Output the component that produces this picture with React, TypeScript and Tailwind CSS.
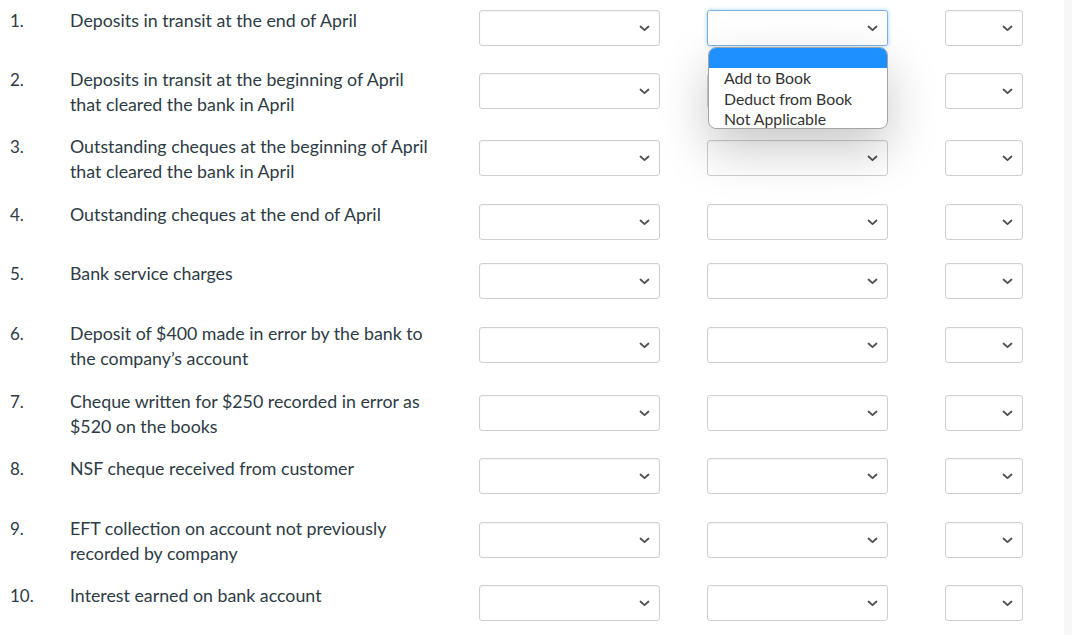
import React from 'react';

type Row = { n: string; lines: string[]; h: string };

const rows: Row[] = [
  { n: '1.', lines: ['Deposits in transit at the end of April'], h: 'h-[63px]' },
  { n: '2.', lines: ['Deposits in transit at the beginning of April', 'that cleared the bank in April'], h: 'h-[67px]' },
  { n: '3.', lines: ['Outstanding cheques at the beginning of April', 'that cleared the bank in April'], h: 'h-[64px]' },
  { n: '4.', lines: ['Outstanding cheques at the end of April'], h: 'h-[59px]' },
  { n: '5.', lines: ['Bank service charges'], h: 'h-[64px]' },
  { n: '6.', lines: ['Deposit of $400 made in error by the bank to', 'the company\u2019s account'], h: 'h-[68px]' },
  { n: '7.', lines: ['Cheque written for $250 recorded in error as', '$520 on the books'], h: 'h-[63px]' },
  { n: '8.', lines: ['NSF cheque received from customer'], h: 'h-[64px]' },
  { n: '9.', lines: ['EFT collection on account not previously', 'recorded by company'], h: 'h-[63px]' },
  { n: '10.', lines: ['Interest earned on bank account'], h: 'h-[50px]' },
];

const Chevron = () => (
  <svg width="11" height="7" viewBox="0 0 11 7" fill="none" stroke="#505050" strokeWidth="1.8" strokeLinecap="round" strokeLinejoin="round">
    <polyline points="1.5,1.5 5.5,5.2 9.5,1.5" />
  </svg>
);

const SelectBox = ({ width, focused, open }: { width: string; focused?: boolean; open?: boolean }) => (
  <div className={`relative ${width}`}>
    <div
      className={`flex h-[36px] items-center justify-end rounded-[3px] border bg-white pr-[9px] ${
        focused
          ? 'border-[#7fb2e5] shadow-[0_0_4px_rgba(102,175,233,0.6)]'
          : 'border-[#cfcfcf] shadow-[inset_0_1px_2px_rgba(0,0,0,0.04)]'
      }`}
    >
      <Chevron />
    </div>
    {open && (
      <div className="absolute left-[1px] top-[37px] z-10 h-[82px] w-[180px] overflow-hidden rounded-[8px] border border-[#a5a5a5] bg-white shadow-[0_20px_50px_rgba(0,0,0,0.22)]">
        <div className="h-[20px] bg-[#1e90ff]" />
        <div className="pl-[15px] text-[15.8px] leading-[20.5px] text-[#333]">
          <div>Add to Book</div>
          <div>Deduct from Book</div>
          <div>Not Applicable</div>
        </div>
      </div>
    )}
  </div>
);

export default function App() {
  return (
    <div className="flex min-h-[635px] bg-white font-['Lato','Liberation_Sans',sans-serif] text-[#2d3b45]">
      <div className="w-[1064px]">
        {rows.map((r, i) => (
          <div key={r.n} className={`flex items-start pl-[10px] pt-[10px] ${r.h}`}>
            <div className={`w-[460px] flex leading-[25px] ${r.lines.length > 1 ? '-mt-[6px]' : '-mt-[2px]'}`}>
              <div className="w-[60px] text-[17px]">{r.n}</div>
              <div className="w-[400px] text-[17.8px]">
                {r.lines.map((l) => (
                  <div key={l}>{l}</div>
                ))}
              </div>
            </div>
            <div className="ml-[9px]">
              <SelectBox width="w-[181px]" />
            </div>
            <div className="ml-[47px]">
              <SelectBox width="w-[181px]" focused={i === 0} open={i === 0} />
            </div>
            <div className="ml-[57px]">
              <SelectBox width="w-[78px]" />
            </div>
          </div>
        ))}
      </div>
      <div className="flex-1 bg-[#f7f7f7]" />
    </div>
  );
}
